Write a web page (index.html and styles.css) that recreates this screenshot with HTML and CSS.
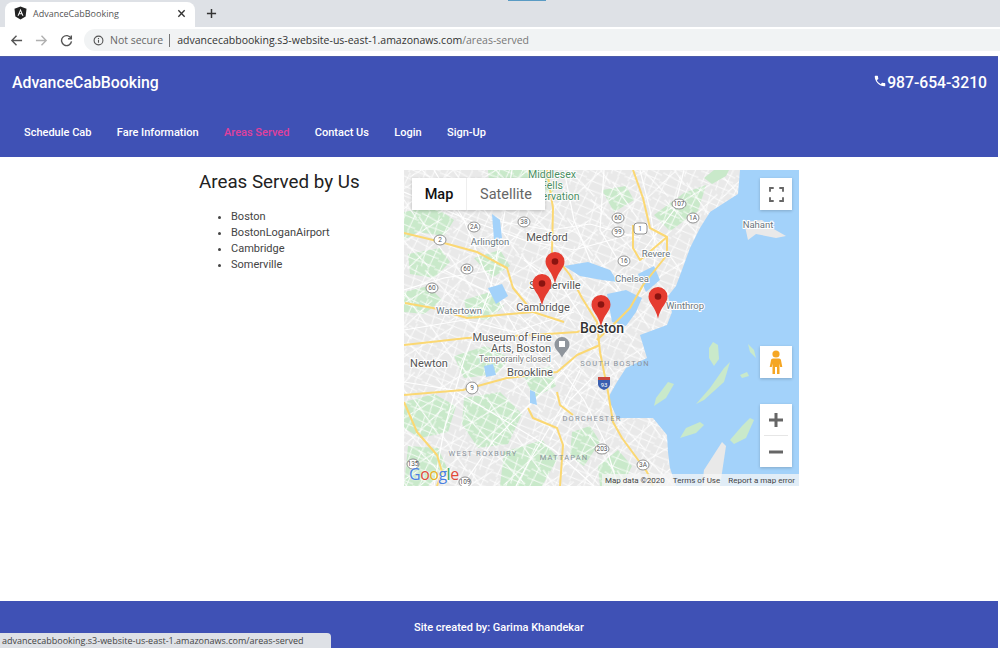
FILE: index.html
```html
<!DOCTYPE html>
<html lang="en">

<head>
    <meta charset="UTF-8">
    <meta name="viewport" content="width=device-width, initial-scale=1.0">
    <title>AdvanceCabBooking</title>
    <link rel="stylesheet" href="styles.css">
</head>
<body>
    <div class="tabstrip">
        <div class="tab">
            <svg class="tab-icon" viewBox="0 0 14 14"><path class="fill-dark" d="M7 0 13.500 2.300 12.500 10.800 7 14 1.500 10.800 .5 2.300z"/><path class="fill-white" d="M7 2.500 3.800 10h1.300l.6-1.600h2.600l.6 1.600h1.300zM7 5l.9 2.300H6.100z"/></svg>
            <span class="tab-title">AdvanceCabBooking</span>
            <svg class="tab-close" viewBox="0 0 10 10"><path d="M1.500 1.500l7 7M8.500 1.500l-7 7"/></svg>
        </div>
        <svg class="new-tab" viewBox="0 0 12 12"><path d="M6 1v10M1 6h10"/></svg>
        <div class="top-mark"></div>
    </div>
    <div class="toolbar">
        <svg class="nav-icon" viewBox="0 0 14 14"><path d="M13 7H2M7 2 2 7l5 5"/></svg>
        <svg class="nav-icon nav-off" viewBox="0 0 14 14"><path d="M1 7h11M7 2l5 5-5 5"/></svg>
        <svg class="nav-icon" viewBox="0 0 14 14"><path d="M11.800 4.500A5.400 5.400 0 1 0 12.400 8M12.200 1.500v3.600H8.600"/></svg>
        <div class="address">
            <svg class="info-icon" viewBox="0 0 12 12"><circle cx="6" cy="6" r="4.800"/><path d="M6 5.500v3M6 3.300v1.200"/></svg>
            <span class="not-secure">Not secure</span>
            <span class="address-sep"></span>
            <span class="url">advancecabbooking.s3-website-us-east-1.amazonaws.com<span class="url-path">/areas-served</span></span>
        </div>
    </div>

    <div class="page">
        <header class="site-header">
            <div class="brand-row">
                <span class="brand">AdvanceCabBooking</span>
                <span class="phone">
                    <svg class="phone-icon" viewBox="0 0 24 24"><path d="M6.600 10.800c1.400 2.800 3.800 5.100 6.600 6.600l2.200-2.200c.3-.3.700-.4 1-.2 1.100.4 2.300.6 3.600.6.600 0 1 .4 1 1V20c0 .6-.4 1-1 1C10.600 21 3 13.400 3 4c0-.6.400-1 1-1h3.500c.6 0 1 .4 1 1 0 1.300.2 2.500.6 3.600.1.300 0 .7-.2 1z"/></svg>987-654-3210
                </span>
            </div>
            <nav class="site-nav">
                <a href="#">Schedule Cab</a>
                <a href="#">Fare Information</a>
                <a href="#" class="active">Areas Served</a>
                <a href="#">Contact Us</a>
                <a href="#">Login</a>
                <a href="#">Sign-Up</a>
            </nav>
        </header>

        <main class="content">
            <section class="areas">
                <h2>Areas Served by Us</h2>
                <ul>
                    <li>Boston</li>
                    <li>BostonLoganAirport</li>
                    <li>Cambridge</li>
                    <li>Somerville</li>
                </ul>
            </section>

            <div class="map">
                <svg class="map-canvas" viewBox="0 0 395 316">
                    <defs>
                        <pattern id="grid-a" width="34" height="27" patternUnits="userSpaceOnUse" patternTransform="rotate(24)">
                            <path d="M0 5 34 8M0 15 34 13M0 24 34 22M7 0 5 27M17 0 21 27M29 0 28 27"/>
                        </pattern>
                        <pattern id="grid-b" width="58" height="46" patternUnits="userSpaceOnUse" patternTransform="rotate(-38)">
                            <path d="M0 9 58 16M0 34 58 28M13 0 18 46M41 0 38 46"/>
                        </pattern>
                    </defs>
                    <rect class="land" width="395" height="316"/>

                    <!-- parks -->
                    <path class="park" d="M0 42 30 36 50 50 40 66 14 62 0 70z"/>
                    <path class="park" d="M4 84 36 78 46 92 30 108 6 104z"/>
                    <path class="park" d="M0 122 24 116 38 130 20 144 0 142z"/>
                    <path class="park" d="M84 0h56l10 20-12 14-32 4-20-12z"/>
                    <path class="park" d="M70 88 96 80 106 96 88 108z"/>
                    <path class="park" d="M198 20l24-4 8 14-20 12z"/>
                    <path class="park" d="M250 45l30-22 22-8-8 26-28 20z"/>
                    <path class="park" d="M50 186 82 176 106 188 92 204 60 208z"/>
                    <path class="park" d="M0 232 30 224 52 236 44 262 16 268 0 258z"/>
                    <path class="park" d="M60 228 96 222 118 244 104 274 74 278 58 254z"/>
                    <path class="park" d="M4 276 34 278 44 300 24 316H0z"/>
                    <path class="park" d="M100 282 138 270 154 288 138 316H96z"/>
                    <path class="park" d="M120 206 146 196 152 216 130 228z"/>
                    <path class="park" d="M168 262 186 256 196 272 180 296 166 286z"/>
                    <path class="park" d="M194 296 214 280 228 296 218 316H196z"/>
                    <path class="park" d="M60 130 86 122 100 136 84 150 64 148z"/>

                    <!-- local streets -->
                    <rect class="grid grid-a" width="395" height="316"/>
                    <rect class="grid grid-b" width="395" height="316"/>
                    <g class="street">
                        <path d="M0 22 60 48 120 70 170 80 236 62M30 0l30 50 20 50 20 40 30 50M108 0 96 70 86 120 60 190 40 260 30 316"/>
                        <path d="M160 0 170 50 190 100 220 128M200 0 196 60 214 90M236 0l10 40 6 40-4 30M280 0l-10 40-30 40"/>
                        <path d="M0 160 60 150 110 162 170 142M0 212 50 220 100 250 150 280 190 316M58 316 90 270 130 230 170 190"/>
                        <path d="M120 90l40 30 20 30M86 50l60 10 40-6 50 14M40 100l60 30 40 40M0 120l40-12 50-8"/>
                        <path d="M150 190l30 40 20 40 14 46M176 200l-20 40-30 50-14 26M120 168l30 30M196 200l-30 30-20 40"/>
                    </g>

                    <!-- water -->
                    <path class="water" d="M336 0 334 24 306 42 296 58 286 78 278 100 272 116 264 126 268 142 263 155 236 165 243 188 222 198 213 212 204 228 213 248 249 248 263 265 264 282 266 298 272 316H395V0z"/>
                    <path class="water" d="M203 124 222 120 238 128 232 142 222 156 208 152z"/>
                    <path class="water" d="M160 96 184 92 206 100 214 112 198 110 176 106z"/>
                    <path class="water" d="M234 104 250 96 256 110 242 122z"/>
                    <path class="water" d="M84 118l14-4 6 12-12 8z"/>
                    <path class="water" d="M88 44l8 6 2 18-8 2z"/>
                    <path class="water" d="M80 196l9-2 3 11-10 2z"/>
                    <path class="water" d="M126 220l5 2 2 13-7-2z"/>
                    <path class="land" d="M340 52l18-2 10 8 14 8-10 2-20-4-8 6z"/>

                    <!-- harbor islands -->
                    <path class="park" d="M305 178l4-6 5 3 1 14-5 7-5-8z"/>
                    <path class="park" d="M252 228l12-16 6 2-8 14-12 8z"/>
                    <path class="park" d="M292 234l14-16 14-20 6-6-6 20-20 18z"/>
                    <path class="park" d="M276 268l16-5 8-8-4-3-14 6z"/>
                    <path class="park" d="M326 270l12-14 8-8 4 2-8 18-12 6z"/>
                    <path class="park" d="M336 205l7-3 2 4-7 2z"/>
                    <path class="park" d="M344 174l6 6 2 8-6-6z"/>
                    <path class="park" d="M300 8 310 0 325 0 322 6 308 14z"/>
                    <path class="land" d="M300 300 318 272 322 276 316 316H298z"/>

                    <!-- main roads -->
                    <g class="road">
                        <path d="M0 63 29 70 73 82 103 98 109 118 129 142 160 152"/>
                        <path d="M143 0 149 38 148 82 166 105 178 128 193 152 196 182 204 222 209 252 218 268 243 302 249 316"/>
                        <path d="M229 0 239 28 246 58 263 67 263 85 239 115 226 138 209 155 193 170"/>
                        <path d="M229 55 229 78 236 90 263 67M0 175 63 168 129 165 173 162 196 155"/>
                        <path d="M0 225 59 220 103 208 153 202 173 185 196 175"/>
                        <path d="M0 232 13 262 33 285 38 302 33 316M124 238 129 248 153 258 159 275 156 316"/>
                        <path d="M153 222 156 235 169 245M1 133 29 138 63 148 129 142"/>
                    </g>

                    <!-- road shields -->
                    <g class="shields">
                        <ellipse cx="36" cy="70" rx="6" ry="5"/>
                        <ellipse cx="70" cy="57" rx="6" ry="5"/>
                        <ellipse cx="120" cy="52" rx="6" ry="5"/>
                        <ellipse cx="214" cy="48" rx="6" ry="5"/>
                        <ellipse cx="214" cy="62" rx="6" ry="5"/>
                        <ellipse cx="275" cy="34" rx="7" ry="5"/>
                        <ellipse cx="289" cy="48" rx="6" ry="5"/>
                        <ellipse cx="220" cy="91" rx="6" ry="5"/>
                        <ellipse cx="63" cy="99" rx="6" ry="5"/>
                        <ellipse cx="28" cy="118" rx="6" ry="5"/>
                        <rect x="230" y="53" width="13" height="11" rx="3"/>
                        <ellipse cx="68" cy="218" rx="6" ry="6"/>
                        <ellipse cx="198" cy="279" rx="7" ry="5"/>
                        <ellipse cx="239" cy="295" rx="6" ry="5"/>
                        <ellipse cx="9" cy="294" rx="6" ry="5"/>
                        <ellipse cx="61" cy="312" rx="6" ry="5"/>
                    </g>
                    <g class="shield-text">
                        <text x="36" y="72">2</text>
                        <text x="70" y="59">2A</text>
                        <text x="120" y="54">38</text>
                        <text x="214" y="50">60</text>
                        <text x="214" y="64">99</text>
                        <text x="275" y="36">107</text>
                        <text x="289" y="50">1A</text>
                        <text x="220" y="93">16</text>
                        <text x="63" y="101">60</text>
                        <text x="28" y="120">60</text>
                        <text x="236" y="61">1</text>
                        <text x="68" y="220">9</text>
                        <text x="198" y="281">203</text>
                        <text x="239" y="297">3A</text>
                        <text x="9" y="296">135</text>
                        <text x="61" y="314">109</text>
                    </g>
                    <path class="i93-top" d="M194 207h12v3h-12z"/>
                    <path class="i93" d="M194 210h12v4c0 3-3 5-6 6-3-1-6-3-6-6z"/>
                    <text class="i93-text" x="200" y="217">93</text>

                    <!-- labels -->
                    <text class="park-label" x="148" y="8">Middlesex</text>
                    <text class="park-label" x="148" y="19">Fells</text>
                    <text class="park-label" x="148" y="30">Reservation</text>
                    <text class="label-mid" x="143" y="71">Medford</text>
                    <text class="label-small" x="86" y="75">Arlington</text>
                    <text class="label-small" x="252" y="87">Revere</text>
                    <text class="label-small" x="228" y="112">Chelsea</text>
                    <text class="label-small" x="354" y="58">Nahant</text>
                    <text class="label-small" x="55" y="144">Watertown</text>
                    <text class="label-mid" x="151" y="119">Somerville</text>
                    <text class="label-mid" x="139" y="141">Cambridge</text>
                    <text class="label-small" x="281" y="139">Winthrop</text>
                    <text class="label-boston" x="198" y="163">Boston</text>
                    <text class="label-mid" x="108" y="171">Museum of Fine</text>
                    <text class="label-mid" x="117" y="182">Arts, Boston</text>
                    <text class="label-closed" x="111" y="192">Temporarily closed</text>
                    <text class="label-mid" x="25" y="197">Newton</text>
                    <text class="label-mid" x="126" y="206">Brookline</text>
                    <text class="label-hood" x="211" y="196">SOUTH BOSTON</text>
                    <text class="label-hood" x="188" y="251">DORCHESTER</text>
                    <text class="label-hood" x="79" y="286">WEST ROXBURY</text>
                    <text class="label-hood" x="160" y="290">MATTAPAN</text>

                    <!-- museum pin -->
                    <path class="poi" d="M150.500 174.500a7.500 7.500 0 1 1 15 0c0 5-4 6-7.500 13-3.500-7-7.500-8-7.500-13z"/>
                    <rect class="poi-mark" x="155" y="171" width="6" height="6"/>

                    <!-- markers -->
                    <g class="pin" transform="translate(151 82)"><path d="M-9.500 9.500a9.500 9.500 0 0 1 19 0c0 7-7 10-9.500 22-2.500-12-9.500-15-9.500-22z"/><circle cy="9.500" r="3.300"/></g>
                    <g class="pin" transform="translate(138 104)"><path d="M-9.500 9.500a9.500 9.500 0 0 1 19 0c0 7-7 10-9.500 22-2.500-12-9.500-15-9.500-22z"/><circle cy="9.500" r="3.300"/></g>
                    <g class="pin" transform="translate(197 125)"><path d="M-9.500 9.500a9.500 9.500 0 0 1 19 0c0 7-7 10-9.500 22-2.500-12-9.500-15-9.500-22z"/><circle cy="9.500" r="3.300"/></g>
                    <g class="pin" transform="translate(254 117)"><path d="M-9.500 9.500a9.500 9.500 0 0 1 19 0c0 7-7 10-9.500 22-2.500-12-9.500-15-9.500-22z"/><circle cy="9.500" r="3.300"/></g>
                </svg>

                <div class="map-types">
                    <span class="map-type current">Map</span>
                    <span class="map-type">Satellite</span>
                </div>
                <button class="map-btn fullscreen">
                    <svg viewBox="0 0 14 14"><path d="M0 4V0h4M10 0h4v4M14 10v4h-4M4 14H0v-4"/></svg>
                </button>
                <button class="map-btn pegman">
                    <svg viewBox="0 0 14 24"><circle class="peg" cx="7" cy="4" r="3.600"/><path class="peg" d="M4 8.500h6c1.200 0 1.800.7 2 1.800l1.300 6.700h-2.100l-.7-3.500V24H8v-7H6v7H3.500V13.500L2.800 17H.7L2 10.300c.2-1.100.8-1.800 2-1.800z"/></svg>
                </button>
                <div class="zoom-box">
                    <button class="zoom-btn"><svg viewBox="0 0 14 14"><path d="M7 0v14M0 7h14"/></svg></button>
                    <span class="zoom-line"></span>
                    <button class="zoom-btn"><svg viewBox="0 0 14 14"><path d="M0 7h14"/></svg></button>
                </div>
                <span class="google"><span class="g-blue">G</span><span class="g-red">o</span><span class="g-yellow">o</span><span class="g-blue">g</span><span class="g-green">l</span><span class="g-red">e</span></span>
                <div class="attribution">
                    <span>Map data ©2020</span>
                    <span>Terms of Use</span>
                    <span>Report a map error</span>
                </div>
            </div>
        </main>

        <footer class="site-footer">Site created by: Garima Khandekar</footer>
    </div>

    <div class="status-bubble">advancecabbooking.s3-website-us-east-1.amazonaws.com/areas-served</div>
</body>

</html>
```

FILE: styles.css
```css
* {
    box-sizing: border-box;
}

html, body {
    height: 100%;
}

body {
    margin: 0;
    font-family: Roboto, "Liberation Sans", sans-serif;
    background-color: #fff;
    display: flex;
    flex-direction: column;
    height: 648px;
    overflow: hidden;
    position: relative;
}

/* browser chrome */
.tabstrip {
    height: 27px;
    flex: none;
    background-color: #dee1e6;
    display: flex;
    align-items: flex-end;
    padding-left: 5px;
    position: relative;
}

.tab {
    width: 190px;
    height: 25px;
    background-color: #fff;
    border-radius: 8px 8px 0 0;
    display: flex;
    align-items: center;
    padding: 0 0 3px 9px;
}

.tab-icon {
    width: 13px;
    height: 14px;
    flex: none;
}

.fill-dark {
    fill: #222;
}

.fill-white {
    fill: #fff;
}

.tab-title {
    margin-left: 6px;
    font: 9px "Open Sans", sans-serif;
    color: #555;
    width: 144px;
}

.tab-close {
    width: 9px;
    height: 9px;
    fill: none;
    stroke: #333;
    stroke-width: 1.500;
}

.new-tab {
    width: 11px;
    height: 11px;
    margin: 0 0 8px 11px;
    fill: none;
    stroke: #333;
    stroke-width: 1.600;
}

.top-mark {
    position: absolute;
    left: 508px;
    top: 0;
    width: 38px;
    height: 1px;
    background-color: #5a9bc4;
}

.toolbar {
    height: 29px;
    flex: none;
    background-color: #fff;
    display: flex;
    align-items: center;
    padding: 0 0 3px 10px;
}

.nav-icon {
    width: 13px;
    height: 13px;
    margin-right: 12px;
    fill: none;
    stroke: #555;
    stroke-width: 1.500;
}

.nav-off {
    stroke: #b0b0b0;
}

.address {
    flex: 1;
    height: 22px;
    margin-left: -1px;
    background-color: #f1f3f4;
    border-radius: 11px 0 0 11px;
    display: flex;
    align-items: center;
    padding-left: 9px;
    font: 10.500px "Open Sans", sans-serif;
}

.info-icon {
    width: 11px;
    height: 11px;
    fill: none;
    stroke: #555;
    stroke-width: 1.200;
}

.not-secure {
    margin-left: 6px;
    color: #666;
}

.address-sep {
    width: 1px;
    height: 13px;
    background-color: #777;
    margin: 0 7px 0 6px;
}

.url {
    color: #333;
}

.url-path {
    color: #777;
}

/* page */
.page {
    flex: 1;
    display: flex;
    flex-direction: column;
    margin-right: 2px;
    min-height: 0;
}

.site-header {
    flex: none;
    height: 101px;
    background-color: #3f51b5;
    color: #fff;
    box-shadow: inset 0 1px 0 #4c5ba8;
}

.brand-row {
    height: 52px;
    display: flex;
    justify-content: space-between;
    align-items: center;
    padding: 0 11px 0 12px;
}

.brand {
    font-size: 15.800px;
    font-weight: 500;
}

.phone {
    font-size: 15.700px;
    font-weight: 500;
    display: flex;
    align-items: center;
}

.phone-icon {
    width: 14px;
    height: 14px;
    fill: #fff;
    margin-bottom: 3px;
}

.site-nav {
    display: flex;
    gap: 25.400px;
    padding: 18px 0 0 24px;
}

.site-nav a {
    color: #fff;
    font-size: 11px;
    font-weight: 500;
    text-decoration: none;
}

.site-nav a.active {
    color: #e0409c;
}

.content {
    flex: 1;
    display: flex;
    padding: 13px 0 0 199px;
}

.areas {
    width: 205px;
}

.areas h2 {
    margin: 1px 0 0;
    font-size: 18.800px;
    font-weight: 400;
    color: #222;
}

.areas ul {
    margin: 16px 0 0;
    padding-left: 32px;
    font-size: 11px;
    line-height: 16px;
    color: #444;
}

/* map */
.map {
    width: 395px;
    height: 316px;
    position: relative;
    overflow: hidden;
}

.map-canvas {
    display: block;
    width: 395px;
    height: 316px;
    font-family: Roboto, sans-serif;
}

.land {
    fill: #e9e9e9;
}

.park {
    fill: #c9e9ca;
}

.water {
    fill: #a3d2fa;
}

#grid-a path,
#grid-b path {
    fill: none;
    stroke: #fff;
}

#grid-a path {
    stroke-width: .8;
}

#grid-b path {
    stroke-width: 1.100;
}

.grid-a {
    fill: url(#grid-a);
}

.grid-b {
    fill: url(#grid-b);
}

.street {
    fill: none;
    stroke: #fff;
    stroke-width: 1.200;
}

.road {
    fill: none;
    stroke: #fbd873;
    stroke-width: 2;
    stroke-linejoin: round;
}

.shields {
    fill: #fff;
    stroke: #777;
    stroke-width: .8;
}

.shield-text {
    font-size: 6.500px;
    text-anchor: middle;
    fill: #555;
}

.i93-top {
    fill: #c9463c;
}

.i93 {
    fill: #3a5fb0;
}

.i93-text {
    font-size: 6px;
    fill: #fff;
    text-anchor: middle;
}

.park-label {
    font-size: 10.500px;
    text-anchor: middle;
    fill: #4b8f63;
    stroke: #fff;
    stroke-width: 1.500px;
    paint-order: stroke;
}

.label-mid {
    font-size: 11px;
    text-anchor: middle;
    fill: #555;
    stroke: #fff;
    stroke-width: 2px;
    paint-order: stroke;
}

.label-small {
    font-size: 9.500px;
    text-anchor: middle;
    fill: #6b7780;
    stroke: #fff;
    stroke-width: 2px;
    paint-order: stroke;
}

.label-closed {
    font-size: 8.500px;
    text-anchor: middle;
    fill: #777;
    stroke: #fff;
    stroke-width: 2px;
    paint-order: stroke;
}

.label-boston {
    font-size: 14px;
    font-weight: 500;
    fill: #333;
    text-anchor: middle;
    stroke: #fff;
    stroke-width: 2px;
    paint-order: stroke;
}

.label-hood {
    font-size: 7.500px;
    letter-spacing: 1.200px;
    text-anchor: middle;
    fill: #8a939c;
}

.poi {
    fill: #8f959c;
}

.poi-mark {
    fill: #fff;
}

.pin path {
    fill: #e53c30;
}

.pin circle {
    fill: #8a1410;
}

.map-types {
    position: absolute;
    left: 8px;
    top: 8px;
    height: 32px;
    display: flex;
    background-color: #fff;
    box-shadow: 0 1px 3px rgba(0, 0, 0, 0.2);
    font-size: 14.500px;
}

.map-type {
    display: flex;
    align-items: center;
    justify-content: center;
    width: 78px;
    color: #666;
}

.map-type.current {
    width: 55px;
    color: #111;
    font-weight: 500;
    border-right: 1px solid #eee;
}

.map-btn {
    position: absolute;
    left: 356px;
    width: 32px;
    height: 32px;
    padding: 0;
    border: none;
    background-color: #fff;
    box-shadow: 0 1px 3px rgba(0, 0, 0, 0.2);
    display: flex;
    align-items: center;
    justify-content: center;
}

.fullscreen {
    top: 8px;
}

.fullscreen svg {
    width: 13px;
    height: 13px;
    fill: none;
    stroke: #666;
    stroke-width: 2;
    overflow: visible;
}

.pegman {
    top: 176px;
}

.pegman svg {
    width: 14px;
    height: 24px;
}

.peg {
    fill: #f5a623;
}

.zoom-box {
    position: absolute;
    left: 356px;
    top: 234px;
    width: 32px;
    height: 63px;
    background-color: #fff;
    box-shadow: 0 1px 3px rgba(0, 0, 0, 0.2);
    display: flex;
    flex-direction: column;
    align-items: center;
}

.zoom-btn {
    width: 32px;
    height: 31px;
    padding: 0;
    border: none;
    background: none;
    display: flex;
    align-items: center;
    justify-content: center;
}

.zoom-btn svg {
    width: 14px;
    height: 14px;
    fill: none;
    stroke: #666;
    stroke-width: 3;
}

.zoom-line {
    width: 24px;
    height: 1px;
    background-color: #e6e6e6;
}

.google {
    position: absolute;
    left: 5px;
    bottom: 1px;
    font: 500 16px "Open Sans", sans-serif;
    letter-spacing: -0.500px;
    text-shadow: 0 0 2px #fff;
}

.g-blue {
    color: #4a80e0;
}

.g-red {
    color: #e0493a;
}

.g-yellow {
    color: #e8b020;
}

.g-green {
    color: #3da85a;
}

.attribution {
    position: absolute;
    right: 0;
    bottom: 0;
    height: 12px;
    padding: 0 4px 0 3px;
    background-color: rgba(245, 245, 245, 0.75);
    display: flex;
    align-items: center;
    gap: 8px;
    font-size: 8px;
    color: #444;
}

/* footer */
.site-footer {
    flex: none;
    height: 47px;
    background-color: #3f51b5;
    color: #fff;
    font-size: 11px;
    font-weight: 500;
    text-align: center;
    padding-top: 20px;
}

.status-bubble {
    position: absolute;
    left: 0;
    bottom: 0;
    width: 331px;
    height: 15px;
    background-color: #dee1e6;
    border-top-right-radius: 4px;
    padding-left: 2px;
    font: 9px/15px "Open Sans", sans-serif;
    color: #444;
}
```
